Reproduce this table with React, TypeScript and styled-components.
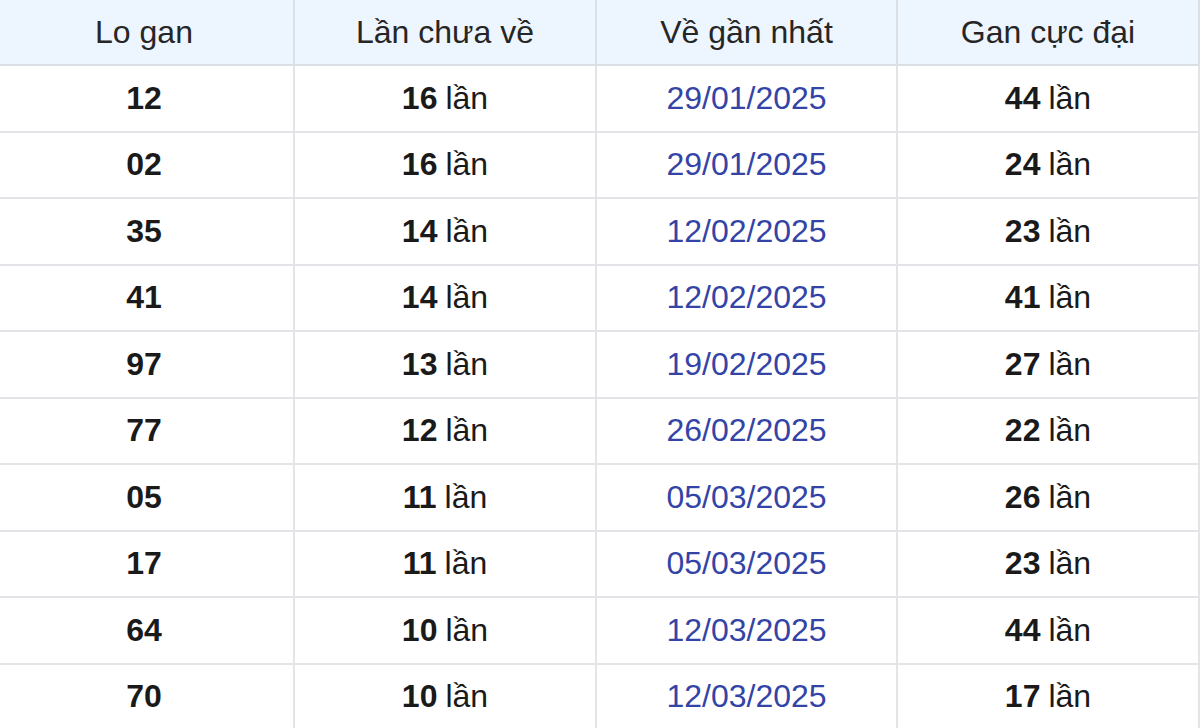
import React from "react";
import styled, { createGlobalStyle } from "styled-components";

const GlobalStyle = createGlobalStyle`
  body {
    margin: 0;
    background: #ffffff;
    font-family: "Liberation Sans", Arial, sans-serif;
  }
`;

const Table = styled.div`
  display: grid;
  grid-template-columns: 300px 302px 301px 302px;
  margin-left: -5px;
  width: 1205px;
`;

const HeadCell = styled.div`
  height: 64px;
  display: flex;
  align-items: center;
  justify-content: center;
  background: #edf5fe;
  border-right: 2px solid #dcdfe4;
  border-bottom: 2px solid #dcdfe4;
  font-size: 32px;
  color: #262626;
  box-sizing: content-box;
`;

const Cell = styled.div<{ $date?: boolean }>`
  height: 64.5px;
  display: flex;
  align-items: center;
  justify-content: center;
  border-right: 2px solid #e2e4e8;
  border-bottom: 2px solid #e2e4e8;
  font-size: 32px;
  color: ${(p) => (p.$date ? "#3444a6" : "#1a1a1a")};
  box-sizing: content-box;
`;

const Num = styled.b`
  font-weight: 700;
  margin-right: 8px;
`;

type Row = { lo: string; cur: number; last: string; max: number };

const rows: Row[] = [
  { lo: "12", cur: 16, last: "29/01/2025", max: 44 },
  { lo: "02", cur: 16, last: "29/01/2025", max: 24 },
  { lo: "35", cur: 14, last: "12/02/2025", max: 23 },
  { lo: "41", cur: 14, last: "12/02/2025", max: 41 },
  { lo: "97", cur: 13, last: "19/02/2025", max: 27 },
  { lo: "77", cur: 12, last: "26/02/2025", max: 22 },
  { lo: "05", cur: 11, last: "05/03/2025", max: 26 },
  { lo: "17", cur: 11, last: "05/03/2025", max: 23 },
  { lo: "64", cur: 10, last: "12/03/2025", max: 44 },
  { lo: "70", cur: 10, last: "12/03/2025", max: 17 },
];

const App = () => {
  return (
    <>
      <GlobalStyle />
      <Table>
        <HeadCell>Lo gan</HeadCell>
        <HeadCell>Lần chưa về</HeadCell>
        <HeadCell>Về gần nhất</HeadCell>
        <HeadCell>Gan cực đại</HeadCell>
        {rows.map((r, i) => (
          <React.Fragment key={i}>
            <Cell>
              <b>{r.lo}</b>
            </Cell>
            <Cell>
              <Num>{r.cur}</Num>lần
            </Cell>
            <Cell $date>{r.last}</Cell>
            <Cell>
              <Num>{r.max}</Num>lần
            </Cell>
          </React.Fragment>
        ))}
      </Table>
    </>
  );
};

export default App;
